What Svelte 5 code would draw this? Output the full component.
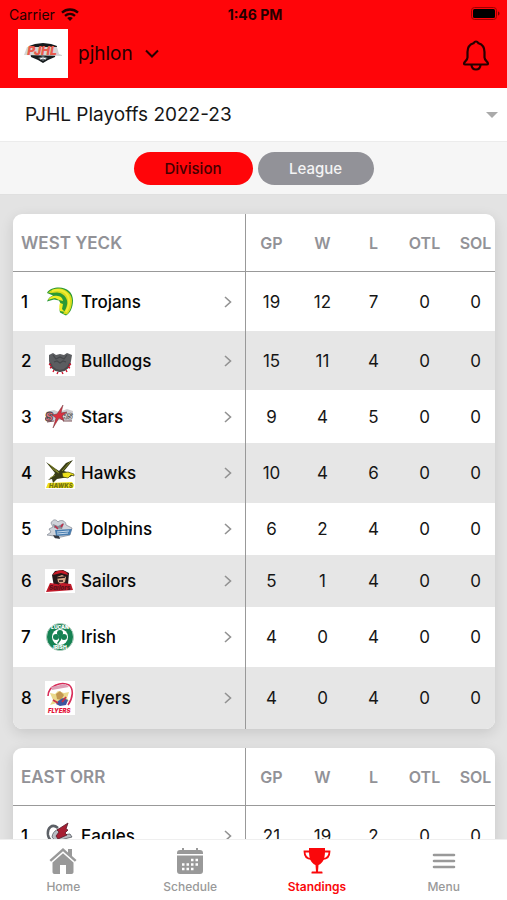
<script>
  const columns = ['GP', 'W', 'L', 'OTL', 'SOL'];
  const divisions = [
    {
      name: 'WEST YECK',
      teams: [
        { name: 'Trojans', logoHeight: 31, stats: [19, 12, 7, 0, 0] },
        { name: 'Bulldogs', logoHeight: 31, stats: [15, 11, 4, 0, 0] },
        { name: 'Stars', logoHeight: 25, stats: [9, 4, 5, 0, 0] },
        { name: 'Hawks', logoHeight: 32, stats: [10, 4, 6, 0, 0] },
        { name: 'Dolphins', logoHeight: 24, stats: [6, 2, 4, 0, 0] },
        { name: 'Sailors', logoHeight: 24, stats: [5, 1, 4, 0, 0] },
        { name: 'Irish', logoHeight: 32, stats: [4, 0, 4, 0, 0] },
        { name: 'Flyers', logoHeight: 34, stats: [4, 0, 4, 0, 0] }
      ]
    },
    {
      name: 'EAST ORR',
      teams: [{ name: 'Eagles', logoHeight: 32, stats: [21, 19, 2, 0, 0] }]
    }
  ];
  const tabs = ['Home', 'Schedule', 'Standings', 'Menu'];
  let view = $state('Division');
  let activeTab = $state('Standings');
</script>

{#snippet logo(team)}
  <svg class="logo" width="30" height={team.logoHeight} viewBox="0 0 30 {team.logoHeight}" aria-hidden="true">
    {#if team.name === 'Trojans'}
      <path d="M2 7C4 3 9 1.500 14 1.500c8 0 14 5 14 13 0 7-3 13-7 15l-6-3c-1-3 0-5 1-8l-2-4-5-1-7 2c1-3 3-5 6-6z" fill="#2c9a35" />
      <path d="M3 6.500C7 3 11 2 15 2.500c7 1 12 6 12 12 0 6-2 11-5 14l-4-1c3-4 5-9 4-13-1-5-6-8-10-8-3 0-6 1-9 0z" fill="#d9dc1c" />
      <path d="M7 5c6-2 13-1 16 5 2 5 1 11-2 16" fill="none" stroke="#f0ec35" stroke-width="2" />
      <path d="M3 14c2-4 6-5 10-4 3 0 5 3 5 5l-4-1-4-2-4 1zM15 17l3 1-1 5 3 3-5-1c-1-3-1-5 0-8z" fill="#f1ed24" />
    {:else if team.name === 'Bulldogs'}
      <rect width="30" height="31" fill="#fff" />
      <path d="M4 10l4-2 3 2 4-1 4 1 3-2 5 2-1 6-1 5-4 4-6 2-6-2-4-4-1-5z" fill="#5b5d60" />
      <path d="M8 10l3 4 4-2 4 2 3-4M9 17l3-1 3 2 3-2 3 1" fill="none" stroke="#45474a" stroke-width="1.200" />
      <path d="M5 18l2 4 4 3 4 1 4-1 4-3 2-4" fill="none" stroke="#4a4a4c" stroke-width="2" />
      <path d="M4 19l2 1M5 23l2-1M8 27l1-2M12 29l1-2M18 29l-1-2M22 27l-1-2M25 23l-2-1M26 19l-2 1" stroke="#cf1730" stroke-width="1.400" />
    {:else if team.name === 'Stars'}
      <path d="M1 8l8-2 5 2 8-3 6 2-1 10-11-1-14 2-2-4 3-2z" fill="#cfcdcf" />
      <text x="0" y="17" font-size="12" font-weight="900" font-style="italic" fill="#e2717d" stroke="#444" stroke-width=".8">S</text>
      <text x="17" y="15" font-size="8" font-weight="900" font-style="italic" fill="#f1e9ea" stroke="#555" stroke-width=".6">RS</text>
      <path d="M18 1l-2 8 6-1-5 4 2 5-5-3-6 10 3-10-4-3 5-1z" fill="#d9303f" stroke="#6d343a" stroke-width=".5" />
      <path d="M2 18l7-1M18 17h9" stroke="#7c5056" stroke-width="1" />
    {:else if team.name === 'Hawks'}
      <rect width="30" height="32" fill="#fff" />
      <path d="M1 5l10 7 3 2L21 6l7-3-4 5-5 6 6 2 3 2-3 2-7 1-6 1-4 4-1-4-4 1 5-4 2-3z" fill="#383c16" />
      <path d="M4 7l9 8M6 11l8 5M17 14l8-9M10 18l-5 3" stroke="#969b30" stroke-width=".8" />
      <path d="M17 16l6-1 6 2v2l-3-1-3 3-5-1z" fill="#eee11d" stroke="#343812" stroke-width=".6" />
      <path d="M3 26l24-1 2 3-1 3H1z" fill="#eee11d" />
      <text x="4" y="31" font-size="6" font-weight="900" font-style="italic" fill="#77760e">HAWKS</text>
    {:else if team.name === 'Dolphins'}
      <path d="M6 6c2-4 5-4 7-1 3-3 8-1 8 3l6 3-2 7-9 2-6 1-1-2-7-1 4-3-2-3 4-2z" fill="#cfd3da" stroke="#8b909a" stroke-width=".8" />
      <path d="M8 7l5 2 6-3-2 6-8-1z" fill="#858a95" />
      <path d="M10 9l3 3m5-5l-2 3" stroke="#c02c48" stroke-width="1.600" />
      <path d="M10 13l17-1-2 6-14 1z" fill="#477caf" />
      <path d="M12 15l12-1M12 17l11-1" stroke="#e9f1fa" stroke-width=".8" />
      <path d="M8 18l6 1 1 3-5-1z" fill="#343840" />
    {:else if team.name === 'Sailors'}
      <rect width="30" height="24" fill="#fff" />
      <path d="M7 6l3-4 8-1 6 3-1 12-6 2H9z" fill="#241819" />
      <path d="M8 6c2-6 14-6 15 0l-7-2z" fill="#c91a26" />
      <path d="M12 8l5-2 4 2-1 5-4 2-3-2z" fill="#d9a888" />
      <path d="M12 9l8-1M14 12h4" stroke="#221315" stroke-width="1.500" />
      <path d="M5 14l7 1 6-1 8 1 2 6-27 2z" fill="#c01a2a" />
      <text x="4" y="21" font-size="6" font-weight="900" font-style="italic" fill="#5d1119">Sailors</text>
    {:else if team.name === 'Irish'}
      <circle cx="15" cy="16" r="13.500" fill="#168253" stroke="#b1cfc0" />
      <circle cx="15" cy="16" r="8" fill="#fff" />
      <text x="15" y="8" text-anchor="middle" font-size="5" font-weight="900" fill="#fff">LUCAN</text>
      <text x="15" y="28" text-anchor="middle" font-size="5" font-weight="900" fill="#fff">IRISH</text>
      <g fill="#168253"><circle cx="15" cy="12" r="3" /><circle cx="11" cy="16" r="3" /><circle cx="19" cy="16" r="3" /><path d="M14 14h3l-1 5-3 4-1-1 2-3z" /></g>
    {:else if team.name === 'Flyers'}
      <rect width="30" height="34" fill="#fff" />
      <path d="M3 15C3 5 16 0 24 4c5 4 4 13-1 20" fill="none" stroke="#d82d59" stroke-width="1.600" />
      <path d="M6 6l14-3 4 3-17 3z" fill="#dda0b6" />
      <path d="M5 12l5 1 3-3 6 2 5-1-2 6 2 3-6 3-6-1-7 2 3-5z" fill="#ead98c" />
      <path d="M11 13l4-3 4 4-3 5-4-1z" fill="#c39750" />
      <path d="M13 20l5-3 5 2-2 5-6 1-4-2z" fill="#3c559f" />
      <path d="M8 19l5 3M17 21l4-5" stroke="#c83045" stroke-width="1.800" />
      <text x="3" y="32" font-size="6" font-weight="900" font-style="italic" fill="#e4173d">FLYERS</text>
    {:else}
      <path d="M13 8C7 3 2 8 3 15c1 6 7 9 12 8" fill="none" stroke="#5c6066" stroke-width="2.500" />
      <path d="M7 17c1-7 7-9 13-8l-3 6 8-1 2 3-8 2-7 4z" fill="#b9bdc3" stroke="#55585f" stroke-width=".8" />
      <path d="M12 10l11-7-2 6 2 1-3 3 2 2-9 4-2-3 3-4z" fill="#a71e32" stroke="#571b29" stroke-width=".8" />
    {/if}
  </svg>
{/snippet}

<div class="app">
  <header>
    <div class="status">
      <span class="carrier">Carrier
        <svg width="18" height="13" viewBox="0 0 18 13" aria-hidden="true">
          <path d="M1 4.600C5.500.5 12.500.5 17 4.600M4 7.800c3-2.600 7-2.600 10 0" fill="none" stroke="#240000" stroke-width="2.400" />
          <path d="M6.200 10c1.700-1.400 3.900-1.400 5.600 0L9 13z" fill="#240000" />
        </svg>
      </span>
      <span class="time">1:46 PM</span>
      <svg class="battery" width="30" height="14" viewBox="0 0 30 14" aria-hidden="true">
        <rect x=".5" y=".5" width="25" height="12" rx="3" fill="none" stroke="#9d0000" />
        <rect x="2" y="2" width="22" height="9" rx="1.500" />
        <path d="M27 4.500c2 .5 2 3.500 0 4z" fill="#780000" />
      </svg>
    </div>
    <div class="brand">
      <button class="team-switch">
        <svg width="50" height="49" viewBox="0 0 50 49" aria-hidden="true">
          <rect width="50" height="49" fill="#fff" />
          <path d="M11 17l6-2 8-1 8 1 6 2-2 11-7 3-5 3-5-3-7-3z" fill="#151a1c" />
          <path d="M20 29l5-2 5 2-5 3z" fill="#687176" />
          <path d="M6 26l3-8h30l2 7 3 1v1z" fill="#d5d5d5" />
          <text x="24" y="26" text-anchor="middle" font-size="12" font-weight="900" font-style="italic" fill="#e95c4d">PJHL</text>
          <path d="M22 30l3-1 3 1" fill="none" stroke="#fff" />
        </svg>
        <span>pjhlon</span>
        <svg class="down" width="14" height="9" viewBox="0 0 14 9" aria-hidden="true"><path d="M1 1.500l6 6 6-6" fill="none" stroke="#240000" stroke-width="2" /></svg>
      </button>
      <button class="bell" aria-label="Notifications">
        <svg width="26" height="31" viewBox="0 0 26 31" aria-hidden="true">
          <path d="M13 1.500c-1.500 0-2 1-2.500 1.800C6.500 4.500 4.500 8 4.500 12v5.500c0 2.500-3.500 4.500-3.500 6 0 .7.500 1 1.200 1h21.600c.7 0 1.200-.3 1.200-1 0-1.500-3.500-3.500-3.500-6V12c0-4-2-7.500-6-8.700-.5-.8-1-1.800-2.500-1.800z" fill="none" stroke="#260000" stroke-width="2.200" />
          <path d="M8.500 25c.5 6 8.500 6 9 0" fill="none" stroke="#260000" stroke-width="2.200" />
        </svg>
      </button>
    </div>
  </header>

  <div class="season">
    <select aria-label="Season"><option>PJHL Playoffs 2022-23</option></select>
    <svg width="12" height="6" viewBox="0 0 12 6" aria-hidden="true"><path d="M0 0h12L6 6z" fill="#aaa" /></svg>
  </div>

  <div class="views">
    {#each ['Division', 'League'] as option}
      <button class:selected={view === option} aria-pressed={view === option} onclick={() => (view = option)}>{option}</button>
    {/each}
  </div>

  <main>
    {#each divisions as division}
      <section class="card">
        <table>
          <thead>
            <tr>
              <th class="lead" scope="col">{division.name}</th>
              {#each columns as column}<th scope="col">{column}</th>{/each}
            </tr>
          </thead>
          <tbody>
            {#each division.teams as team, i}
              <tr>
                <td class="lead">
                  <a href="#{team.name}">
                    <span class="rank">{i + 1}</span>
                    {@render logo(team)}
                    <span class="name">{team.name}</span>
                    <svg width="8" height="12" viewBox="0 0 8 12" aria-hidden="true"><path d="M1 1l5.500 5L1 11" fill="none" stroke="#929292" stroke-width="1.600" /></svg>
                  </a>
                </td>
                {#each team.stats as value}<td>{value}</td>{/each}
              </tr>
            {/each}
          </tbody>
        </table>
      </section>
    {/each}
  </main>

  <nav>
    {#each tabs as tab}
      <button class:active={activeTab === tab} onclick={() => (activeTab = tab)}>
        <svg width="28" height="28" viewBox="0 0 28 28" aria-hidden="true">
          {#if tab === 'Home'}
            <path d="M14 1L.5 13l1.600 1.800L14 4.300l11.900 10.500 1.600-1.800-4.500-4V2h-4v3.400z" fill="currentColor" />
            <path d="M14 6.200L3.500 15.500V25c0 1.200.8 2 2 2H11v-9h6v9h5.500c1.200 0 2-.8 2-2v-9.500z" fill="currentColor" />
          {:else if tab === 'Schedule'}
            <path d="M4 3h2V1h2v2h12V1h2v2h2c2 0 3 1 3 3v1H1V6c0-2 1-3 3-3zM1 8.500h26V24c0 2-1 3-3 3H4c-2 0-3-1-3-3z" fill="currentColor" />
            <path d="M15 13h2.500M19.500 13h2.500M6 17.500h2.500M10.500 17.500h2.500M15 17.500h2.500M19.500 17.500h2.500M6 22h2.500M10.500 22h2.500M15 22h2.500" stroke="#fff" stroke-width="2.500" />
          {:else if tab === 'Standings'}
            <path d="M6 1h16v3c0 8-2 12-6.500 14l-.5 6.500h3.500c.8 0 1 .5 1 1v1h-11v-1c0-.5.200-1 1-1H13l-.5-6.500C8 16 6 12 6 4z" fill="currentColor" />
            <path d="M7 4.500H1.500C1.500 9 4 12 8.500 12M21 4.500h5.500C26.500 9 24 12 19.500 12" fill="none" stroke="currentColor" stroke-width="1.800" />
          {:else}
            <path d="M4 8h20M4 14h20M4 20h20" stroke="currentColor" stroke-width="2.600" stroke-linecap="round" />
          {/if}
        </svg>
        <span>{tab}</span>
      </button>
    {/each}
  </nav>
</div>

<style>
  :global(body) { background: #e3e3e3; }
  * { box-sizing: border-box; }
  .app {
    display: flex;
    flex-direction: column;
    height: 100vh;
    overflow: hidden;
    font-family: Inter, "Liberation Sans", sans-serif;
    font-size: 17px;
    color: #161616;
  }
  button, select {
    font: inherit;
    color: inherit;
    border: 0;
    padding: 0;
    background: none;
    cursor: pointer;
  }
  a { color: inherit; text-decoration: none; }
  svg { flex: none; display: block; }
  header { background: #ff0509; color: #240000; flex: none; height: 88px; }
  .status {
    display: grid;
    grid-template-columns: 1fr auto 1fr;
    align-items: center;
    height: 28px;
    padding: 0 6px 0 9px;
    font-size: 14px;
  }
  .carrier { display: flex; align-items: center; gap: 6px; }
  .time { font-weight: 700; }
  .battery { justify-self: end; }
  .brand { display: flex; justify-content: space-between; align-items: center; padding: 1px 18px 0; }
  .team-switch { display: flex; align-items: center; gap: 10px; font-size: 19px; }
  .down { margin-left: 2px; }
  .bell { padding-top: 4px; }
  .season {
    display: flex;
    align-items: center;
    flex: none;
    height: 54px;
    padding: 0 9px 0 25px;
    background: #fff;
    border-bottom: 1px solid #ececec;
  }
  select { appearance: none; flex: 1; height: 100%; font-size: 19px; outline: 0; }
  .views {
    display: flex;
    justify-content: center;
    align-items: center;
    gap: 5px;
    flex: none;
    height: 53px;
    background: #f6f6f6;
    border-bottom: 1px solid #e0e0e0;
  }
  .views button {
    min-width: 116px;
    height: 33px;
    padding: 0 28px;
    border-radius: 17px;
    background: #929298;
    color: #f4f4f4;
    font-size: 15px;
    font-weight: 500;
  }
  .views .selected { min-width: 119px; background: #ff0509; color: #430000; }
  main {
    flex: 1;
    min-height: 0;
    overflow-y: auto;
    scrollbar-width: none;
    padding: 19px 12px 19px 13px;
  }
  .card {
    overflow: hidden;
    margin-bottom: 19px;
    border-radius: 9px;
    background: #fff;
    box-shadow: 0 4px 14px rgba(0, 0, 0, .12);
  }
  table { width: calc(100% + 6px); table-layout: fixed; border-collapse: separate; border-spacing: 0; }
  th, td { width: 51px; padding: 0; text-align: center; }
  th {
    height: 58px;
    border-bottom: 1px solid #999;
    color: #929297;
    font-size: 16px;
    font-weight: 600;
  }
  td { font-weight: 400; }
  .lead { width: auto; padding: 0 13px 0 8px; border-right: 1px solid #999; text-align: left; }
  th.lead { font-size: 17px; }
  tbody tr:nth-child(even) { background: #e6e6e6; }
  td a { display: flex; align-items: center; padding: 14px 0; color: #050505; font-weight: 500; }
  .rank { width: 24px; }
  .name { flex: 1; padding-left: 6px; }
  nav { display: flex; flex: none; height: 61px; background: #fff; border-top: 1px solid #efefef; }
  nav button {
    display: flex;
    flex: 1;
    flex-direction: column;
    align-items: center;
    gap: 4px;
    padding-top: 7px;
    color: #999;
    font-size: 12px;
    line-height: 16px;
    font-weight: 500;
  }
  nav .active { color: #fa080b; font-weight: 600; }
</style>
